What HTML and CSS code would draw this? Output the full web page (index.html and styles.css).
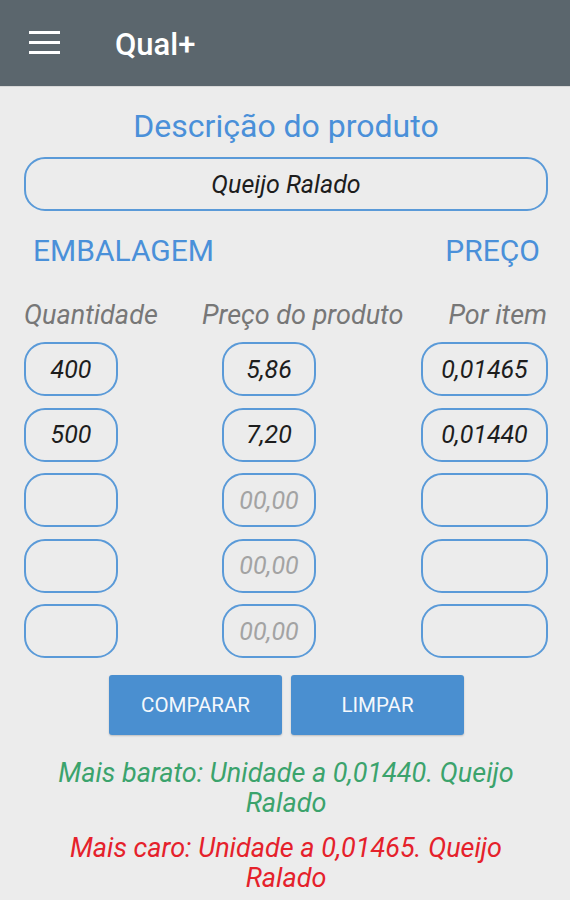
FILE: index.html
```html
<!DOCTYPE html>
<html lang="pt">
<head>
<meta charset="utf-8">
<link rel="stylesheet" href="styles.css">
</head>
<body>
<header class="appbar">
  <svg class="menu" width="31" height="23" viewBox="0 0 31 23"><rect x="0" y="0" width="31" height="3" fill="#fff"/><rect x="0" y="10" width="31" height="3" fill="#fff"/><rect x="0" y="20" width="31" height="3" fill="#fff"/></svg>
  <span class="title">Qual+</span>
</header>
<main class="content">
  <h1 class="section-title">Descrição do produto</h1>
  <div class="field wide">Queijo Ralado</div>
  <div class="labels">
    <span>EMBALAGEM</span>
    <span>PREÇO</span>
  </div>
  <div class="heads">
    <div class="head h1">Quantidade</div>
    <div class="head h2">Preço do produto</div>
    <div class="head h3">Por item</div>
  </div>
  <div class="grid">
    <div class="field qty">400</div>
    <div class="field price">5,86</div>
    <div class="field unit">0,01465</div>

    <div class="field qty">500</div>
    <div class="field price">7,20</div>
    <div class="field unit">0,01440</div>

    <div class="field qty"></div>
    <div class="field price hint">00,00</div>
    <div class="field unit"></div>

    <div class="field qty"></div>
    <div class="field price hint">00,00</div>
    <div class="field unit"></div>

    <div class="field qty"></div>
    <div class="field price hint">00,00</div>
    <div class="field unit"></div>
  </div>
  <div class="buttons">
    <button class="btn">COMPARAR</button>
    <button class="btn">LIMPAR</button>
  </div>
  <p class="result cheap">Mais barato: Unidade a 0,01440. Queijo Ralado</p>
  <p class="result dear">Mais caro: Unidade a 0,01465. Queijo Ralado</p>
</main>
</body>
</html>
```
FILE: styles.css
```css
html, body { margin: 0; padding: 0; }
body {
  width: 570px;
  height: 900px;
  overflow: hidden;
  background: #ececec;
  font-family: Roboto, "Noto Sans", sans-serif;
}
.appbar {
  height: 87px;
  background: #5b666d;
  border-bottom: 1px solid #d8d8d8;
  display: flex;
  align-items: center;
  padding-left: 29px;
  box-sizing: border-box;
}
.menu { margin-top: -2px; }
.title {
  color: #fff;
  font-size: 31px;
  font-weight: 500;
  margin-left: 55px;
  margin-top: 2px;
}
.content {
  padding: 0 22px 0 24px;
}
.section-title {
  margin: 0;
  padding-top: 20px;
  height: 70px;
  box-sizing: border-box;
  text-align: center;
  font-weight: 400;
  font-size: 32px;
  line-height: 38px;
  color: #4a90d9;
}
.field {
  box-sizing: border-box;
  height: 54px;
  border: 2px solid #5a9ad8;
  border-radius: 21px;
  display: flex;
  align-items: center;
  justify-content: center;
  font-style: italic;
  font-size: 25px;
  color: #1d1d1d;
}
.wide { width: 524px; }
.labels {
  display: flex;
  justify-content: space-between;
  padding: 22px 8px 0 9px;
  height: 58px;
  box-sizing: border-box;
  font-size: 30px;
  color: #4a90d9;
  line-height: 36px;
}
.heads {
  display: grid;
  grid-template-columns: 178px 219px 127px;
  padding-top: 29px;
  height: 63px;
  box-sizing: border-box;
}
.head {
  font-style: italic;
  font-size: 27px;
  color: #777;
  line-height: 34px;
  white-space: nowrap;
}
.h3 { text-align: right; padding-right: 1px; }
.grid {
  display: grid;
  grid-template-columns: 178px 219px 127px;
  grid-auto-rows: 54px;
  row-gap: 11.5px;
  margin-top: 10px;
}
.qty { width: 94px; }
.price { width: 94px; margin-left: 20px; }
.unit { width: 127px; }
.hint { color: #a3a3a3; }
.buttons {
  display: flex;
  gap: 9px;
  margin: 17px 0 0 85px;
}
.btn {
  border: none;
  background: #4a8fd0;
  color: #f4f8fc;
  font-family: Roboto, sans-serif;
  font-size: 20.5px;
  width: 173px;
  height: 60px;
  border-radius: 3px;
  padding: 0;
  box-shadow: 0 1px 2px rgba(0,0,0,0.2);
}
.result {
  margin: 0 auto;
  max-width: 490px;
  text-align: center;
  font-style: italic;
  font-size: 27px;
  line-height: 30px;
}
.cheap { color: #3ba36c; margin-top: 23px; }
.dear { color: #e5212b; margin-top: 15px; }
```
